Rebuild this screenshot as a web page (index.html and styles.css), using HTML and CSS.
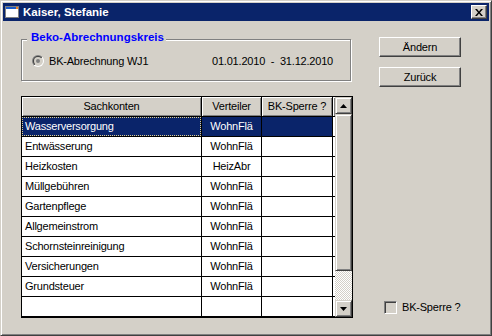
FILE: index.html
```html
<!DOCTYPE html>
<html lang="de">
<head>
<meta charset="utf-8">
<title>Kaiser, Stefanie</title>
<link rel="stylesheet" href="styles.css">
</head>
<body>
<div class="window">
  <div class="titlebar">
    <svg class="app-icon" width="16" height="16" viewBox="0 0 16 16">
      <rect x="1.5" y="2.5" width="13" height="11" fill="#fff" stroke="#808080"/>
      <rect x="2" y="3" width="12" height="2" fill="#1c5cc8"/>
      <rect x="12" y="3" width="2" height="2" fill="#f08020"/>
    </svg>
    <span class="title">Kaiser, Stefanie</span>
    <div class="close">
      <svg width="8" height="7" viewBox="0 0 8 7"><path d="M0,0h2l2,2.4 2,-2.4h2l-3,3.5 3,3.5h-2l-2,-2.4 -2,2.4h-2l3,-3.5z" fill="#000"/></svg>
    </div>
  </div>
  <div class="client">
    <div class="main">
      <div class="groupbox">
        <span class="legend">Beko-Abrechnungskreis</span>
        <div class="option">
          <svg class="radio" width="12" height="12" viewBox="0 0 12 12">
            <defs>
              <linearGradient id="ro" x1="0" y1="0" x2="1" y2="1">
                <stop offset="0.5" stop-color="#808080"/><stop offset="0.5" stop-color="#ffffff"/>
              </linearGradient>
              <linearGradient id="ri" x1="0" y1="0" x2="1" y2="1">
                <stop offset="0.5" stop-color="#404040"/><stop offset="0.5" stop-color="#d4d0c8"/>
              </linearGradient>
            </defs>
            <circle cx="6" cy="6" r="6" fill="url(#ro)"/>
            <circle cx="6" cy="6" r="5" fill="url(#ri)"/>
            <circle cx="6" cy="6" r="4" fill="#d4d0c8"/>
            <circle cx="6" cy="6" r="2" fill="#808080"/>
          </svg>
          <span class="opt-label">BK-Abrechnung WJ1</span>
          <span class="dates">01.01.2010&nbsp; -&nbsp; 31.12.2010</span>
        </div>
      </div>
      <div class="grid">
        <div class="cells">
          <div class="c h">Sachkonten</div><div class="c h">Verteiler</div><div class="c h">BK-Sperre ?</div><div class="c h"></div>
          <div class="c sel focus">Wasserversorgung</div><div class="c sel ctr">WohnFlä</div><div class="c sel"></div><div class="c"></div>
          <div class="c">Entwässerung</div><div class="c ctr">WohnFlä</div><div class="c"></div><div class="c"></div>
          <div class="c">Heizkosten</div><div class="c ctr">HeizAbr</div><div class="c"></div><div class="c"></div>
          <div class="c">Müllgebühren</div><div class="c ctr">WohnFlä</div><div class="c"></div><div class="c"></div>
          <div class="c">Gartenpflege</div><div class="c ctr">WohnFlä</div><div class="c"></div><div class="c"></div>
          <div class="c">Allgemeinstrom</div><div class="c ctr">WohnFlä</div><div class="c"></div><div class="c"></div>
          <div class="c">Schornsteinreinigung</div><div class="c ctr">WohnFlä</div><div class="c"></div><div class="c"></div>
          <div class="c">Versicherungen</div><div class="c ctr">WohnFlä</div><div class="c"></div><div class="c"></div>
          <div class="c">Grundsteuer</div><div class="c ctr">WohnFlä</div><div class="c"></div><div class="c"></div>
          <div class="c"></div><div class="c"></div><div class="c"></div><div class="c"></div>
        </div>
        <div class="scroll">
          <div class="sbtn"><svg width="7" height="4" viewBox="0 0 7 4"><path d="M3.5,0L7,4H0z" fill="#000"/></svg></div>
          <div class="thumb"></div>
          <div class="track"></div>
          <div class="sbtn"><svg width="7" height="4" viewBox="0 0 7 4"><path d="M0,0H7L3.5,4z" fill="#000"/></svg></div>
        </div>
      </div>
    </div>
    <div class="side">
      <button class="btn">Ändern</button>
      <button class="btn">Zurück</button>
      <label class="checkrow"><span class="check"></span><span>BK-Sperre ?</span></label>
    </div>
  </div>
</div>
</body>
</html>
```
FILE: styles.css
```css
* { box-sizing: border-box; margin: 0; padding: 0; }
html, body { width: 492px; height: 336px; overflow: hidden; }
body {
  font-family: "Liberation Sans", Arial, sans-serif;
  font-size: 11px;
  letter-spacing: -0.2px;
  color: #000;
  background: #d4d0c8;
}
.window {
  width: 492px;
  height: 336px;
  background: #d4d0c8;
  border: 1px solid;
  border-color: #d4d0c8 #404040 #404040 #d4d0c8;
  box-shadow: inset 1px 1px 0 #fff, inset -1px -1px 0 #808080;
  padding: 2px;
  display: flex;
  flex-direction: column;
}
.titlebar {
  flex: none;
  height: 18px;
  background: #0a246a;
  color: #fff;
  display: flex;
  align-items: center;
}
.app-icon { flex: none; margin-left: 1px; }
.title {
  flex: 1;
  margin-left: 3px;
  font-weight: bold;
  font-size: 11.5px;
  letter-spacing: 0;
  line-height: 18px;
}
.close {
  flex: none;
  width: 16px;
  height: 14px;
  margin-right: 2px;
  background: #d4d0c8;
  border: 1px solid;
  border-color: #fff #404040 #404040 #fff;
  box-shadow: inset -1px -1px 0 #808080;
  display: flex;
  align-items: center;
  justify-content: center;
}
.client {
  flex: 1;
  display: flex;
  gap: 26px;
  padding: 16px 0 0 18px;
}
.main {
  width: 332px;
  display: flex;
  flex-direction: column;
}
.groupbox {
  position: relative;
  margin-top: 2px;
  width: 330px;
  height: 42px;
  border: 1px solid #808080;
  box-shadow: 1px 1px 0 #fff, inset 1px 1px 0 #fff;
  padding: 15px 0 0 10px;
}
.legend {
  position: absolute;
  top: -10px;
  left: 5px;
  padding: 0 2px 0 4px;
  background: #d4d0c8;
  color: #0000ff;
  font-weight: bold;
  font-size: 11.5px;
  letter-spacing: 0;
  line-height: 14px;
  white-space: nowrap;
}
.option {
  display: flex;
  align-items: center;
  height: 12px;
  line-height: 13px;
  white-space: nowrap;
}
.radio { flex: none; }
.opt-label { width: 163px; margin-left: 5px; }
.grid {
  margin-top: 15px;
  width: 332px;
  height: 222px;
  border: 1px solid #000;
  background: #fff;
  display: flex;
}
.cells {
  width: 313px;
  display: grid;
  grid-template-columns: 179px 59px 70px 2px;
  grid-auto-rows: 19px;
  gap: 1px;
  padding-bottom: 1px;
  background: #000;
  align-content: start;
}
.c {
  background: #fff;
  padding: 0 3px;
  line-height: 19px;
  white-space: nowrap;
  overflow: hidden;
}
.h {
  background: #d4d0c8;
  text-align: center;
  padding: 0;
  box-shadow: inset 1px 1px 0 #fff, inset -1px -1px 0 #808080;
}
.ctr { text-align: center; }
.sel { background: #0a246a; color: #fff; }
.focus { outline: 1px dotted #e0d090; outline-offset: -1px; }
.scroll {
  width: 17px;
  display: flex;
  flex-direction: column;
  background: #d4d0c8;
}
.sbtn, .thumb {
  background: #d4d0c8;
  border: 1px solid;
  border-color: #d4d0c8 #404040 #404040 #d4d0c8;
  box-shadow: inset 1px 1px 0 #fff, inset -1px -1px 0 #808080;
}
.sbtn {
  flex: none;
  height: 17px;
  display: flex;
  align-items: center;
  justify-content: center;
}
.thumb { flex: none; height: 157px; }
.track {
  flex: 1;
  background: repeating-conic-gradient(#fff 0 25%, #d4d0c8 0 50%) 0 0 / 2px 2px;
}
.side {
  width: 82px;
  display: flex;
  flex-direction: column;
  gap: 10px;
}
.btn {
  height: 20px;
  background: #d4d0c8;
  border: 1px solid;
  border-color: #fff #404040 #404040 #fff;
  box-shadow: inset -1px -1px 0 #808080;
  font: inherit;
  letter-spacing: inherit;
  color: #000;
  text-align: center;
  line-height: 17px;
}
.checkrow {
  margin-top: auto;
  margin-bottom: 19px;
  padding-left: 5px;
  display: flex;
  align-items: center;
  gap: 5px;
  height: 13px;
  line-height: 13px;
  white-space: nowrap;
}
.check {
  flex: none;
  width: 13px;
  height: 13px;
  border: 1px solid;
  border-color: #808080 #fff #fff #808080;
  box-shadow: inset 1px 1px 0 #404040, inset -1px -1px 0 #d4d0c8;
  background: #d4d0c8;
}
```
